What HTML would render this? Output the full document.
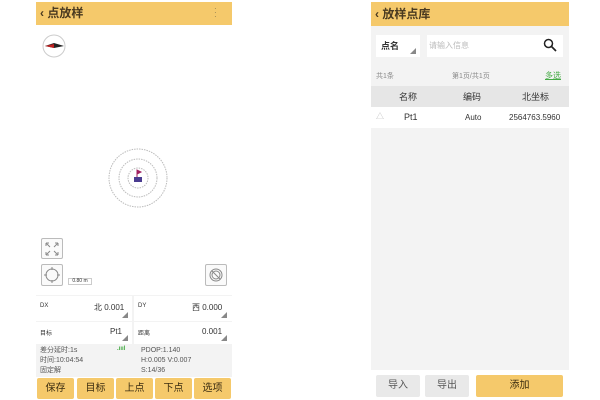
<!DOCTYPE html><html><head><meta charset="utf-8"><style>
*{margin:0;padding:0;box-sizing:border-box}
body{width:600px;height:400px;background:#fff;position:relative;overflow:hidden;font-family:"Liberation Sans","Noto Sans CJK SC",sans-serif;color:#333}
.a{position:absolute}
.hd{background:#f5c96b;color:#4a3a20;font-size:12px;font-weight:bold;line-height:23px;padding-left:4px}
.btn{background:#f5c96b;color:#3a2c10;font-size:10px;text-align:center;line-height:21px;border-radius:2px}
.tri{width:0;height:0;border-left:6px solid transparent;border-bottom:6px solid #888}
.box{border:1px solid #bbb;border-radius:2px;background:#fafafa}
</style></head><body>
<div class="a" style="left:36px;top:2px;width:196px;height:398px;background:#fff"></div>
<div class="a hd" style="left:36px;top:2px;width:196px;height:23px">‹ 点放样</div>
<div class="a" style="left:214px;top:7px;color:#8a7a50;font-size:8px;line-height:4px">·<br>·<br>·</div>
<svg class="a" style="left:40px;top:32px" width="30" height="28"><circle cx="14" cy="14" r="11" fill="none" stroke="#ccc"/><path d="M5 14 L14 11 L24 14 L14 16Z" fill="#222"/><path d="M5 14 L14 12 L14 16Z" fill="#c02020"/></svg>
<svg class="a" style="left:105px;top:145px" width="66" height="66"><g fill="none" stroke="#bbb" stroke-dasharray="1.5 1"><circle cx="33" cy="33" r="29"/><circle cx="33" cy="33" r="19"/><circle cx="33" cy="33" r="10"/></g><rect x="29" y="32" width="8" height="5" fill="#4a3c90"/><path d="M32 32V25l4 2-4 2" stroke="#a02060" fill="#a02060"/></svg>
<div class="a box" style="left:41px;top:238px;width:22px;height:21px"><svg class="a" style="left:3px;top:3px" width="14" height="14" stroke="#888" fill="none"><path d="M1 1l4 4M1 1h3M1 1v3M13 1l-4 4M13 1h-3M13 1v3M1 13l4-4M1 13h3M1 13v-3M13 13l-4-4M13 13h-3M13 13v-3"/></svg></div>
<div class="a box" style="left:41px;top:264px;width:22px;height:22px"><svg class="a" style="left:2px;top:2px" width="16" height="16" stroke="#888" fill="none"><circle cx="8" cy="8" r="6"/><path d="M8 0v3M8 13v3M0 8h3M13 8h3"/></svg></div>
<div class="a" style="left:68px;top:278px;width:24px;height:7px;border:1px solid #ccc;font-size:5px;line-height:5px;text-align:center">0.80 m</div>
<div class="a box" style="left:205px;top:264px;width:22px;height:22px"><svg class="a" style="left:2px;top:2px" width="16" height="16" stroke="#888" fill="none"><circle cx="8" cy="8" r="6"/><circle cx="8" cy="8" r="4"/><path d="M4 4l8 8"/></svg></div>
<div class="a" style="left:36px;top:295px;width:196px;height:82px;background:#f3f3f3"></div>
<div class="a" style="left:36px;top:296px;width:96px;height:25px;background:#fff"></div>
<div class="a" style="left:134px;top:296px;width:98px;height:25px;background:#fff"></div>
<div class="a" style="left:36px;top:322px;width:96px;height:22px;background:#fff"></div>
<div class="a" style="left:134px;top:322px;width:98px;height:22px;background:#fff"></div>
<div class="a" style="left:40px;top:303px;font-size:6px">DX</div>
<div class="a" style="left:94px;top:302px;font-size:8px">北 0.001</div>
<div class="a" style="left:138px;top:303px;font-size:6px">DY</div>
<div class="a" style="left:192px;top:302px;font-size:8px">西 0.000</div>
<div class="a" style="left:40px;top:328px;font-size:6px">目标</div>
<div class="a" style="left:110px;top:327px;font-size:8px">Pt1</div>
<div class="a" style="left:138px;top:328px;font-size:6px">距离</div>
<div class="a" style="left:202px;top:327px;font-size:8px">0.001</div>
<div class="a tri" style="left:122px;top:312px"></div><div class="a tri" style="left:221px;top:312px"></div>
<div class="a tri" style="left:122px;top:335px"></div><div class="a tri" style="left:221px;top:335px"></div>
<div class="a" style="left:40px;top:346px;font-size:7px;line-height:10px;color:#555">差分延时:1s<br>时间:10:04:54<br>固定解</div>
<div class="a" style="left:117px;top:346px;font-size:6px;color:#4a4;font-weight:bold">.ıııl</div>
<div class="a" style="left:141px;top:346px;font-size:7px;line-height:10px;color:#555">PDOP:1.140<br>H:0.005 V:0.007<br>S:14/36</div>
<div class="a btn" style="left:37px;top:378px;width:37px">保存</div>
<div class="a btn" style="left:77px;top:378px;width:37px">目标</div>
<div class="a btn" style="left:116px;top:378px;width:37px">上点</div>
<div class="a btn" style="left:155px;top:378px;width:37px">下点</div>
<div class="a btn" style="left:194px;top:378px;width:37px">选项</div>
<div class="a" style="left:371px;top:2px;width:198px;height:398px;background:#f3f3f3"></div>
<div class="a hd" style="left:371px;top:2px;width:198px;height:24px;line-height:24px">‹ 放样点库</div>
<div class="a" style="left:376px;top:35px;width:44px;height:22px;background:#fff;font-size:9px;line-height:22px;padding-left:5px;font-weight:bold">点名</div>
<div class="a tri" style="left:410px;top:48px"></div>
<div class="a" style="left:427px;top:35px;width:136px;height:22px;background:#fff;font-size:8px;line-height:22px;padding-left:2px;color:#bbb">请输入信息</div>
<svg class="a" style="left:543px;top:38px" width="14" height="14"><circle cx="5.5" cy="5.5" r="4" fill="none" stroke="#222" stroke-width="1.5"/><path d="M8.5 8.5L13 13" stroke="#222" stroke-width="1.7"/></svg>
<div class="a" style="left:376px;top:71px;font-size:7px;color:#888">共1条</div>
<div class="a" style="left:452px;top:71px;font-size:7px;color:#888">第1页/共1页</div>
<div class="a" style="left:545px;top:70px;font-size:8px;color:#4a4;text-decoration:underline">多选</div>
<div class="a" style="left:371px;top:86px;width:198px;height:21px;background:#e6e6e6"></div>
<div class="a" style="left:399px;top:90px;font-size:9px">名称</div>
<div class="a" style="left:463px;top:90px;font-size:9px">编码</div>
<div class="a" style="left:522px;top:90px;font-size:9px">北坐标</div>
<div class="a" style="left:371px;top:107px;width:198px;height:21px;background:#fff"></div>
<div class="a" style="left:376px;top:111px;font-size:8px;color:#bbb">△</div>
<div class="a" style="left:404px;top:112px;font-size:9px">Pt1</div>
<div class="a" style="left:465px;top:113px;font-size:8px">Auto</div>
<div class="a" style="left:509px;top:113px;font-size:8px">2564763.5960</div>
<div class="a" style="left:371px;top:370px;width:198px;height:30px;background:#fff"></div>
<div class="a btn" style="left:376px;top:375px;width:44px;height:22px;background:#e9e9e9;color:#555">导入</div>
<div class="a btn" style="left:425px;top:375px;width:44px;height:22px;background:#e9e9e9;color:#555">导出</div>
<div class="a btn" style="left:476px;top:375px;width:87px;height:22px">添加</div>
</body></html>
